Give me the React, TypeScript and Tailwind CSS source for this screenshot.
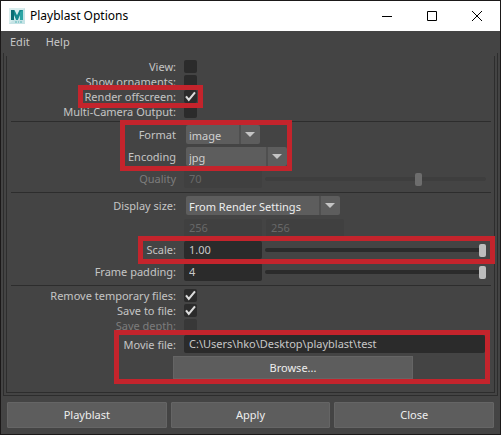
import type { ReactNode } from "react";

const field =
  "h-[18px] min-w-0 rounded-[2px] bg-[#2b2b2b] px-[5px] text-[11px] leading-[18px] text-[#c8c8c8] outline-none disabled:bg-[#404040] disabled:text-[#686868]";

function Mark() {
  return (
    <span aria-hidden="true" className="pointer-events-none absolute -inset-[5px] z-10 border-[5px] border-[#c4242c]" />
  );
}

function Label({ htmlFor, dim, children }: { htmlFor?: string; dim?: boolean; children?: ReactNode }) {
  return (
    <label
      htmlFor={htmlFor}
      className={`w-[165px] shrink-0 text-right text-[11px] leading-[13px] whitespace-nowrap ${dim ? "text-[#7c7c7c]" : "text-[#c4c4c4]"}`}
    >
      {children}
    </label>
  );
}

function CheckRow({ id, label, checked, disabled, marked }: { id: string; label: string; checked?: boolean; disabled?: boolean; marked?: boolean }) {
  return (
    <div className="flex h-[13px] items-center gap-2">
      <Label htmlFor={id} dim={disabled}>{label}</Label>
      <span className="relative block size-[13px]">
        <input
          id={id}
          type="checkbox"
          defaultChecked={checked}
          disabled={disabled}
          className={`peer block size-[13px] appearance-none rounded-[2px] ${disabled ? "bg-[#383838]" : "bg-[#2b2b2b]"}`}
        />
        <svg viewBox="0 0 13 13" className="pointer-events-none absolute inset-0 hidden size-[13px] peer-checked:block" aria-hidden="true">
          <path d="M2 6.3L4.8 9.8L11 2.4" fill="none" stroke="#dcdcdc" strokeWidth="2.1" />
        </svg>
      </span>
      {marked && <span aria-hidden="true" className="pointer-events-none absolute top-[28px] left-[67px] z-10 h-[23px] w-[125px] border-[5px] border-[#c4242c]" />}
    </div>
  );
}

function Select({ id, value, width, bright }: { id: string; value: string; width: string; bright?: boolean }) {
  return (
    <span className={`relative ml-[2px] block h-[19px] ${width}`}>
      <select
        id={id}
        className={`block h-[19px] w-full appearance-none rounded-[2px] bg-[#5d5d5d] pt-[2px] pr-[20px] pl-[3px] text-[11px] leading-[16px] outline-none ${bright ? "text-[#eeeeee]" : "text-[#d0d0d0]"}`}
      >
        <option>{value}</option>
      </select>
      <span className="pointer-events-none absolute inset-y-0 right-0 flex w-[21px] justify-center border-l-2 border-[#4f4f4f] pt-[7px] pr-px">
        <svg width="10" height="5" viewBox="0 0 10 5" aria-hidden="true">
          <path d="M0 0H10L5 5Z" fill="#c4c4c4" />
        </svg>
      </span>
    </span>
  );
}

function SliderRow({ id, label, value, position, disabled, marked }: { id: string; label: string; value: string; position: number; disabled?: boolean; marked?: boolean }) {
  return (
    <div className="flex h-[19px] items-center gap-2">
      <Label htmlFor={id} dim={disabled}>{label}</Label>
      <div className="flex min-w-0 flex-1 items-center gap-[3px] pr-[5px]">
        <input id={id} defaultValue={value} disabled={disabled} className={`${field} w-[78px]`} />
        <input
          type="range"
          aria-label={`${label} slider`}
          defaultValue={position}
          disabled={disabled}
          className={`h-[13px] min-w-0 flex-1 appearance-none bg-transparent [&::-webkit-slider-runnable-track]:h-[4px] [&::-webkit-slider-runnable-track]:rounded-full [&::-webkit-slider-thumb]:-mt-[4px] [&::-webkit-slider-thumb]:h-[13px] [&::-webkit-slider-thumb]:w-[7px] [&::-webkit-slider-thumb]:appearance-none [&::-webkit-slider-thumb]:rounded-[2px] ${
            disabled
              ? "[&::-webkit-slider-runnable-track]:bg-[#3e3e3e] [&::-webkit-slider-thumb]:bg-[#6d6d6d]"
              : "[&::-webkit-slider-runnable-track]:bg-[#2b2b2b] [&::-webkit-slider-thumb]:bg-[#bdbdbd]"
          }`}
        />
      </div>
      {marked && <span aria-hidden="true" className="pointer-events-none absolute top-[43px] -right-1 left-[127px] z-10 h-[28px] border-[5px] border-[#c4242c]" />}
    </div>
  );
}

function Section({ children, tight, last }: { children: ReactNode; tight?: boolean; last?: boolean }) {
  return (
    <section className={`relative flex flex-col pt-[3px] ${tight ? "gap-[2px]" : "gap-[3px] pb-1"} ${last ? "" : "border-b border-[#2d2d2d]"}`}>
      {children}
    </section>
  );
}

const action =
  "h-[26px] flex-1 rounded-[1px] border border-[#656565] bg-[#5d5d5d] text-[11px] leading-[16px] text-[#eeeeee]";

export default function App() {
  return (
    <main className="flex min-h-screen flex-col border border-[#1b1919] bg-[#444444] font-['Noto_Sans',sans-serif]">
      <header className="flex h-[30px] items-center bg-white pl-2 text-black">
        <svg width="16" height="16" viewBox="0 0 16 16" aria-hidden="true">
          <path d="M0 0H16V16H0Z" fill="#c5e3e5" />
          <path d="M0 0H16L0 16Z" fill="#d9eeee" />
          <path d="M2 2H5.5L8 7.2L10.5 2H14V12H11V7L8.8 12H7.2L5 7V12H2Z" fill="#16888c" />
          <path d="M2 2H5V12H2Z" fill="#0b6d73" />
          <path d="M11 4L14 2V12H11Z" fill="#2ba5a5" />
          <path d="M6 14H8M9 14H10M11 14H13" stroke="#58b5b7" />
        </svg>
        <h1 className="ml-[5px] flex-1 text-[12px] leading-[16px]">Playblast Options</h1>
        <div className="flex">
          <button aria-label="Minimize" className="flex h-[30px] w-[45px] items-center justify-center">
            <svg width="10" height="10" viewBox="0 0 10 10"><path d="M0 5.5H10" stroke="#000" /></svg>
          </button>
          <button aria-label="Maximize" className="flex h-[30px] w-[45px] items-center justify-center">
            <svg width="10" height="10" viewBox="0 0 10 10"><path d="M.5 .5H9.5V9.5H.5Z" fill="none" stroke="#000" /></svg>
          </button>
          <button aria-label="Close window" className="flex h-[30px] w-[46px] items-center justify-center">
            <svg width="10" height="10" viewBox="0 0 10 10"><path d="M0 0L10 10M10 0L0 10" stroke="#000" /></svg>
          </button>
        </div>
      </header>

      <nav className="flex h-[22px] gap-4 pl-[9px] text-[11px] leading-[20px] text-[#c8c8c8]">
        <button>Edit</button>
        <button>Help</button>
      </nav>

      <div className="mx-[2px] flex flex-1 flex-col border-x border-b border-[#2d2d2d] px-[2px] pt-[3px] pb-[2px]">
        <form className="flex-1 border-x border-b border-[#2d2d2d] pr-[3px] pb-3 pl-1" onSubmit={(e) => e.preventDefault()}>
          <div className="pt-px">
            <Section tight>
              <CheckRow id="view" label="View:" />
              <CheckRow id="ornaments" label="Show ornaments:" />
              <CheckRow id="offscreen" label="Render offscreen:" checked marked />
              <div className="pb-[3px]"><CheckRow id="multi" label="Multi-Camera Output:" /></div>
            </Section>
          </div>

          <Section>
            <div className="flex h-[19px] items-center gap-2">
              <Label htmlFor="format">Format</Label>
              <Select id="format" value="image" width="w-[74px]" />
            </div>
            <div className="flex h-[19px] items-center gap-2">
              <Label htmlFor="encoding">Encoding</Label>
              <Select id="encoding" value="jpg" width="w-[101px]" />
            </div>
            <SliderRow id="quality" label="Quality" value="70" position={70} disabled />
            <span aria-hidden="true" className="pointer-events-none absolute -top-[2px] left-[109px] z-10 h-[51px] w-[172px] border-[5px] border-[#c4242c]" />
          </Section>

          <Section>
            <div className="flex h-[19px] items-center gap-2">
              <Label htmlFor="size">Display size:</Label>
              <Select id="size" value="From Render Settings" width="w-[154px]" bright />
            </div>
            <div className="flex h-[19px] items-center gap-1 pl-[173px]">
              <input aria-label="Width" defaultValue="256" disabled className={`${field} w-[78px]`} />
              <input aria-label="Height" defaultValue="256" disabled className={`${field} w-[78px]`} />
            </div>
            <SliderRow id="scale" label="Scale:" value="1.00" position={100} marked />
            <SliderRow id="padding" label="Frame padding:" value="4" position={100} />
          </Section>

          <Section tight last>
            <CheckRow id="temp" label="Remove temporary files:" checked />
            <CheckRow id="save" label="Save to file:" checked />
            <CheckRow id="depth" label="Save depth:" disabled />
          </Section>

          <div className="relative mt-[3px] mr-[6px] ml-[108px] flex flex-col gap-[3px]">
            <div className="-ml-[108px] flex h-[18px] items-center gap-2">
              <Label htmlFor="movie">Movie file:</Label>
              <input id="movie" defaultValue={"C:\\Users\\hko\\Desktop\\playblast\\test"} className={`${field} flex-1`} />
            </div>
            <button type="button" className="mr-[72px] ml-[54px] h-[23px] border border-[#656565] bg-[#5d5d5d] text-[11px] leading-[16px] text-[#eeeeee]">
              Browse...
            </button>
            <Mark />
          </div>
        </form>
      </div>

      <footer className="flex gap-1 px-[6px] pt-[6px] pb-[6px]">
        <button className={action}>Playblast</button>
        <button className={action}>Apply</button>
        <button className={action}>Close</button>
      </footer>
    </main>
  );
}
